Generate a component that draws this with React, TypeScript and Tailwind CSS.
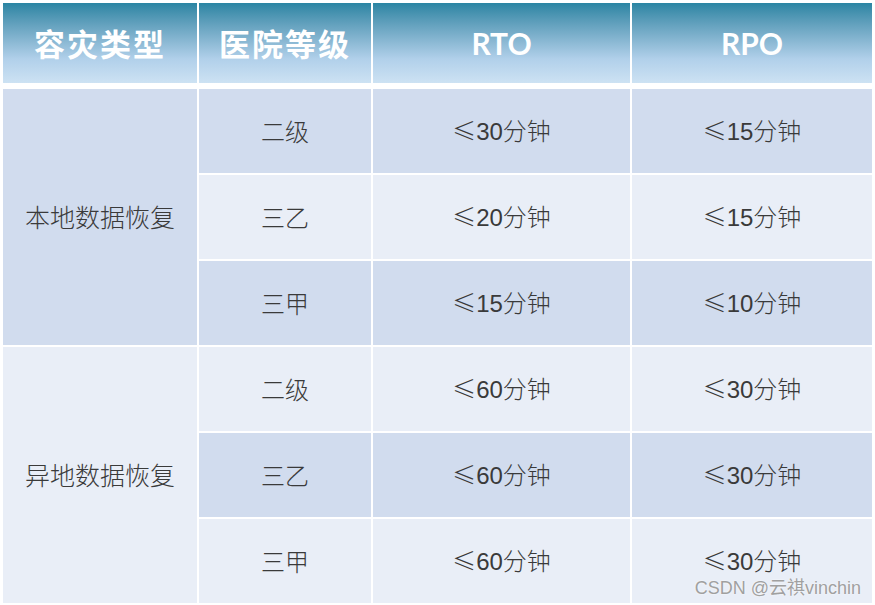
import React from 'react';

const headers = ['容灾类型', '医院等级', 'RTO', 'RPO'];

const groups = [
  {
    name: '本地数据恢复',
    dark: true,
    rows: [
      { level: '二级', rto: '30分钟', rpo: '15分钟' },
      { level: '三乙', rto: '20分钟', rpo: '15分钟' },
      { level: '三甲', rto: '15分钟', rpo: '10分钟' },
    ],
  },
  {
    name: '异地数据恢复',
    dark: false,
    rows: [
      { level: '二级', rto: '60分钟', rpo: '30分钟' },
      { level: '三乙', rto: '60分钟', rpo: '30分钟' },
      { level: '三甲', rto: '60分钟', rpo: '30分钟' },
    ],
  },
];

const cjk = { fontFamily: '"Noto Sans CJK SC", "Noto Sans", sans-serif' };
const latin = { fontFamily: '"Liberation Sans", "Noto Sans CJK SC", sans-serif' };

// "≤" kept in the CJK font so it gets the slanted bar
const Limit = ({ value }: { value: string }) => (
  <span style={latin}>
    <span style={cjk}>≤</span>
    {value}
  </span>
);

export default function App() {
  let rowIndex = 0;

  return (
    <div className="relative w-[875px] h-[605px] bg-white pl-[3px] pt-[3px]" style={cjk}>
      {/* header */}
      <div className="grid grid-cols-[194px_172px_257px_240px] gap-x-[2px]">
        {headers.map((h, i) => (
          <div
            key={h}
            className={`h-[80px] flex items-center justify-center text-white font-bold bg-gradient-to-b from-[#2985a3] via-[#b1d0ea] via-70% to-[#cde2f3] ${
              i < 2 ? 'text-[31px] tracking-[2px]' : 'text-[30px]'
            }`}
            style={i < 2 ? cjk : { fontFamily: 'Lato, "Open Sans", sans-serif' }}
          >
            {h}
          </div>
        ))}
      </div>

      {/* body */}
      <div className="mt-[6px] flex flex-col gap-y-[2px] text-[#3a3a3a] font-light">
        {groups.map((g) => (
          <div key={g.name} className="flex gap-x-[2px]">
            <div
              className={`w-[194px] flex items-center justify-center text-[25px] ${
                g.dark ? 'bg-[#d1dcee]' : 'bg-[#e9eef7]'
              }`}
            >
              {g.name}
            </div>
            <div className="flex flex-col gap-y-[2px]">
              {g.rows.map((r) => {
                const dark = rowIndex++ % 2 === 0;
                const bg = dark ? 'bg-[#d1dcee]' : 'bg-[#e9eef7]';
                return (
                  <div key={r.level + rowIndex} className="grid grid-cols-[172px_257px_240px] gap-x-[2px] h-[84px] text-[24px]">
                    <div className={`${bg} flex items-center justify-center`}>{r.level}</div>
                    <div className={`${bg} flex items-center justify-center`}>
                      <Limit value={r.rto} />
                    </div>
                    <div className={`${bg} flex items-center justify-center`}>
                      <Limit value={r.rpo} />
                    </div>
                  </div>
                );
              })}
            </div>
          </div>
        ))}
      </div>

      {/* watermark */}
      <div
        className="absolute right-[14px] bottom-[8px] text-[18px] text-[#a0a0a0] leading-none"
        style={{ ...latin, textShadow: '0 0 2px #fff' }}
      >
        CSDN @云祺vinchin
      </div>
    </div>
  );
}
